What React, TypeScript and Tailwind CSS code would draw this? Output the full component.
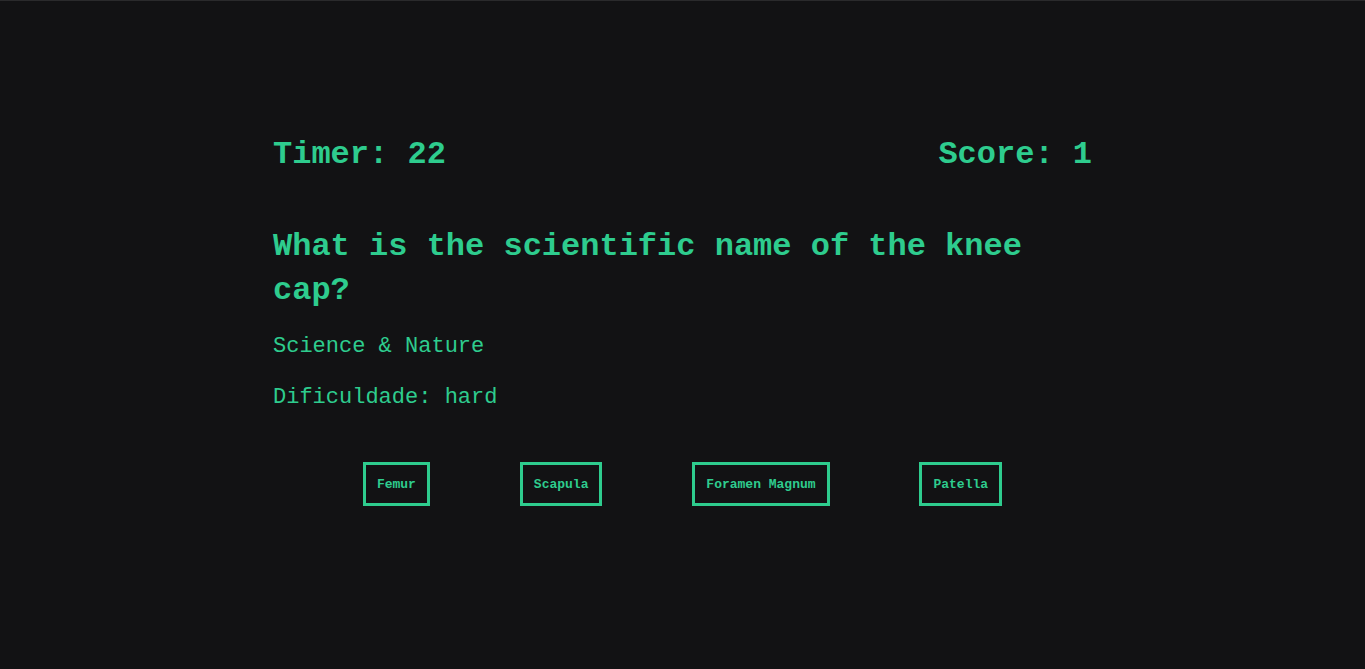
import * as React from "react";

const answers = ["Femur", "Scapula", "Foramen Magnum", "Patella"];

export default function App() {
  const [timer] = React.useState(22);
  const [score] = React.useState(1);

  return (
    <div
      className="min-h-[669px] w-full bg-[#121214] border-t border-[#2a2a2c] text-[#2ecc8e]"
      style={{ fontFamily: '"Liberation Mono", "DejaVu Sans Mono", monospace' }}
    >
      <div className="mx-auto w-[60%] pt-[132px]">
        {/* Header */}
        <div className="flex justify-between text-[32px] leading-[44px] font-bold">
          <span>Timer: {timer}</span>
          <span>Score: {score}</span>
        </div>

        {/* Question */}
        <h1 className="mt-[48px] text-[32px] leading-[44px] font-bold pr-[60px]">
          What is the scientific name of the knee cap?
        </h1>
        <p className="mt-[19px] text-[22px] leading-[30px]">Science &amp; Nature</p>
        <p className="mt-[21px] text-[22px] leading-[30px]">Dificuldade: hard</p>

        {/* Answers */}
        <div className="mt-[49px] flex justify-evenly">
          {answers.map((a) => (
            <button
              key={a}
              className="border-[3px] border-[#2ecc8e] px-[11px] pt-[12px] pb-[10px] text-[13px] leading-[16px] font-bold text-[#2ecc8e] bg-transparent"
              style={{ fontFamily: '"Liberation Mono", "DejaVu Sans Mono", monospace' }}
            >
              {a}
            </button>
          ))}
        </div>
      </div>
    </div>
  );
}
